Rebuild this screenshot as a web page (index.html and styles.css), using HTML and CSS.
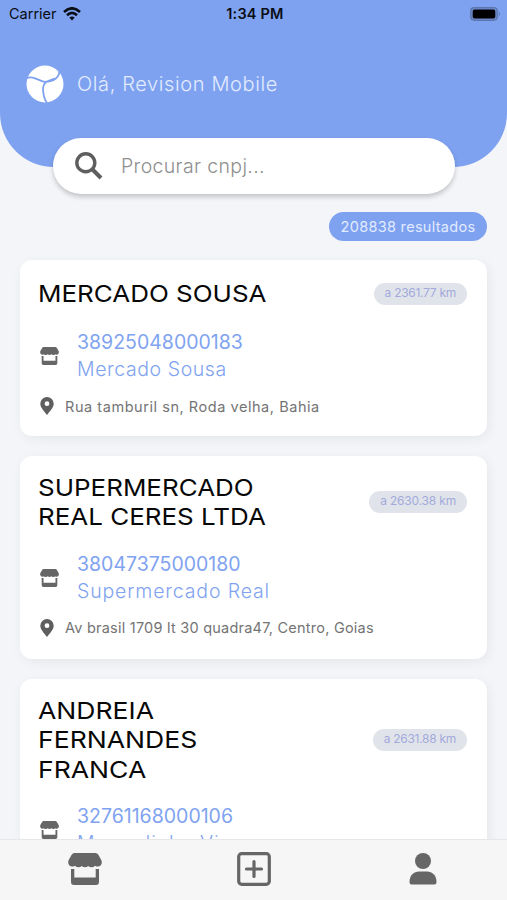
FILE: index.html
```html
<!DOCTYPE html>
<html lang="pt-BR">
<head>
<meta charset="utf-8">
<meta name="viewport" content="width=device-width, initial-scale=1">
<title>Mercados</title>
<link rel="stylesheet" href="styles.css">
</head>
<body>
<svg class="defs" aria-hidden="true">
  <symbol id="store" viewBox="0 0 34 32">
    <path d="M6.500 0H27.500Q29.300 0 30.200 1.600L33.300 7Q34.200 9 33.400 11.200Q32.500 13.600 30 13.600Q28.300 13.600 27 12.700Q25.500 14.200 23.500 14.200Q21.500 14.200 20.200 12.900Q18.800 14.200 17 14.200Q15.200 14.200 13.800 12.900Q12.500 14.200 10.500 14.200Q8.500 14.200 7 12.700Q5.700 13.600 4 13.600Q1.500 13.600 .6 11.200Q-.2 9 .7 7L3.800 1.600Q4.700 0 6.500 0Z"/>
    <path d="M3 16H6.300V24.500H27.700V16H31V29Q31 32 28 32H6Q3 32 3 29Z"/>
  </symbol>
  <symbol id="pin" viewBox="0 0 14 18">
    <path fill-rule="evenodd" d="M7 0A6.700 6.700 0 0 0 .3 6.700C.3 10.500 4.500 14.500 7 18C9.500 14.500 13.700 10.500 13.700 6.700A6.700 6.700 0 0 0 7 0ZM7 4.300A2.400 2.400 0 1 1 7 9.100A2.400 2.400 0 1 1 7 4.300Z"/>
  </symbol>
</svg>
<div class="screen">
  <header class="header">
    <div class="status">
      <div class="carrier"><span>Carrier</span>
        <svg width="18" height="14" viewBox="0 0 18 14" fill="none" stroke="#0a0d14" stroke-width="2.600"><path d="M1 5Q9-2.400 17 5M4 8.200Q9 3.600 14 8.200"/><path d="M6.300 10.600Q9 8.200 11.700 10.600L9 13.500Z" fill="#0a0d14" stroke="none"/></svg>
      </div>
      <div class="time">1:34 PM</div>
      <svg class="battery" width="31" height="14" viewBox="0 0 31 14"><rect x=".7" y=".7" width="26.600" height="12.600" rx="3.500" fill="#6c8acb" stroke="#5c75ae" stroke-width="1.200"/><rect x="2.700" y="2.500" width="22.600" height="9" rx="2" fill="#000"/><path d="M28.800 4.600Q31 7 28.800 9.400Z" fill="#5c75ae"/></svg>
    </div>
    <div class="greeting">
      <svg width="38" height="38" viewBox="0 0 38 38"><circle cx="19" cy="19" r="18.500" fill="#fff"/><path d="M0 13.500C7 10 12 15.500 18.500 16.800C27 16.500 33.500 13 33.500 5M29 13.500C22 16 17.500 17 17 23C17 30 18 34 21 38" fill="none" stroke="#7ea2f0" stroke-width="1.800"/></svg>
      <span class="hello">Olá, Revision Mobile</span>
    </div>
  </header>
  <div class="search">
    <svg width="28" height="28" viewBox="0 0 28 28" fill="none" stroke="#5e5e5e"><circle cx="10.800" cy="10.800" r="9" stroke-width="3.400"/><path d="M17.500 17.500L26 26" stroke-width="4"/></svg>
    <span class="placeholder">Procurar cnpj...</span>
  </div>
  <div class="summary"><span class="count">208838 resultados</span></div>
  <main class="list">
    <article class="card">
      <div class="top"><h2 class="title">MERCADO SOUSA</h2><span class="km tight">a 2361.77 km</span></div>
      <div class="company"><svg class="shop"><use href="#store"/></svg><div><div class="cnpj">38925048000183</div><div class="name short">Mercado Sousa</div></div></div>
      <div class="address wide"><svg class="pin"><use href="#pin"/></svg><span>Rua tamburil sn, Roda velha, Bahia</span></div>
    </article>
    <article class="card">
      <div class="top"><h2 class="title">SUPERMERCADO<br>REAL CERES LTDA</h2><span class="km">a 2630.38 km</span></div>
      <div class="company"><svg class="shop"><use href="#store"/></svg><div><div class="cnpj">38047375000180</div><div class="name">Supermercado Real</div></div></div>
      <div class="address"><svg class="pin"><use href="#pin"/></svg><span>Av brasil 1709 lt 30 quadra47, Centro, Goias</span></div>
    </article>
    <article class="card">
      <div class="top"><h2 class="title expanded">ANDREIA<br>FERNANDES<br>FRANCA</h2><span class="km tight">a 2631.88 km</span></div>
      <div class="company"><svg class="shop"><use href="#store"/></svg><div><div class="cnpj">32761168000106</div><div class="name">Mercadinho Vi</div></div></div>
    </article>
  </main>
  <nav class="tabs">
    <svg width="34" height="32" fill="#666"><use href="#store"/></svg>
    <svg width="34" height="34" viewBox="0 0 34 34" fill="none" stroke="#666" stroke-width="3.200"><rect x="1.700" y="1.700" width="30.600" height="30.600" rx="3"/><path d="M17 9.500V24.500M9.500 17H24.500" stroke-linecap="round"/></svg>
    <svg width="28" height="32" viewBox="0 0 28 32" fill="#666"><circle cx="14" cy="8" r="8"/><path d="M.5 29C.5 22 5 18.500 10 18.500H18C23 18.500 27.500 22 27.500 29Q27.500 31.500 25.500 31.500H2.500Q.5 31.500 .5 29Z"/></svg>
  </nav>
</div>
</body>
</html>
```
FILE: styles.css
```css
* { box-sizing: border-box; }
body { margin: 0; font-family: Inter, "Open Sans", sans-serif; background: #f3f5f9; }
.defs { display: none; }
svg { display: block; flex: none; }
.screen { width: 507px; height: 900px; overflow: hidden; display: flex; flex-direction: column; }
.header { height: 167px; flex: none; background: #7ea2f0; border-radius: 0 0 54px 54px; }
.status { height: 27px; padding: 0 6px 0 9px; display: grid; grid-template-columns: 1fr auto 1fr; align-items: center; color: #0a0d14; font-size: 14.5px; }
.carrier { display: flex; align-items: center; gap: 6px; }
.time { font-weight: 600; font-size: 14.5px; letter-spacing: .2px; }
.battery { justify-self: end; }
.greeting { display: flex; align-items: center; gap: 13px; margin: 38px 0 0 26px; color: #e2ebff; }
.hello { font-size: 20px; font-weight: 300; letter-spacing: .62px; white-space: nowrap; }
.search { width: 402px; height: 56px; flex: none; margin: -29px 0 0 53px; padding-left: 22px; display: flex; align-items: center; gap: 18px; border-radius: 28px; background: #fff; box-shadow: 0 3px 5px rgba(0, 0, 0, .2); }
.placeholder { font-size: 19.5px; font-weight: 300; color: #8e8e8e; letter-spacing: .35px; }
.summary { display: flex; justify-content: flex-end; padding: 18px 20px 0 0; }
.count { width: 158px; height: 29px; line-height: 29px; border-radius: 15px; background: #7ea2f0; color: #e2ebff; font-size: 14.5px; letter-spacing: .3px; text-align: center; white-space: nowrap; }
.list { flex: 1; min-height: 0; padding: 19px 20px 0; display: flex; flex-direction: column; gap: 20px; }
.card { flex: none; background: #fff; border-radius: 12px; padding: 17px 20px 0 18px; height: 176px; box-shadow: 2px 3px 12px rgba(0, 0, 0, .06); }
.card + .card { height: 203px; }
.top { display: flex; align-items: center; justify-content: space-between; min-height: 33px; }
.title { margin: 0; font-size: 23.5px; line-height: 29.3px; font-weight: 400; color: #080808; white-space: nowrap; transform: scaleX(1.105); transform-origin: left; }
.title.expanded { transform: scaleX(1.13); }
.km { height: 22px; padding: 0 11px; border-radius: 11px; line-height: 20px; background: #e0e4ea; color: #a3a9dc; font-size: 12px; letter-spacing: -.18px; white-space: nowrap; }
.km.tight { letter-spacing: -.28px; }
.company { display: flex; align-items: center; gap: 18px; margin-top: 19px; padding-left: 2px; line-height: 27px; }
.shop { width: 19px; height: 18px; fill: #666; }
.cnpj { font-size: 19.5px; color: #80a3f0; }
.name { font-size: 19.5px; font-weight: 300; color: #80a3f0; letter-spacing: .85px; }
.name.short { letter-spacing: .58px; }
.address { display: flex; align-items: center; gap: 11px; margin-top: 13px; padding-left: 2px; height: 20px; font-size: 14.5px; letter-spacing: .23px; color: #747474; white-space: nowrap; }
.address.wide { letter-spacing: .55px; }
.pin { width: 14px; height: 18px; fill: #5e5e5e; }
.tabs { position: relative; flex: none; height: 61px; padding-bottom: 3px; background: #f6f6f6; border-top: 1px solid #e6e7e9; display: grid; grid-template-columns: repeat(3, 1fr); justify-items: center; align-items: center; }
```
